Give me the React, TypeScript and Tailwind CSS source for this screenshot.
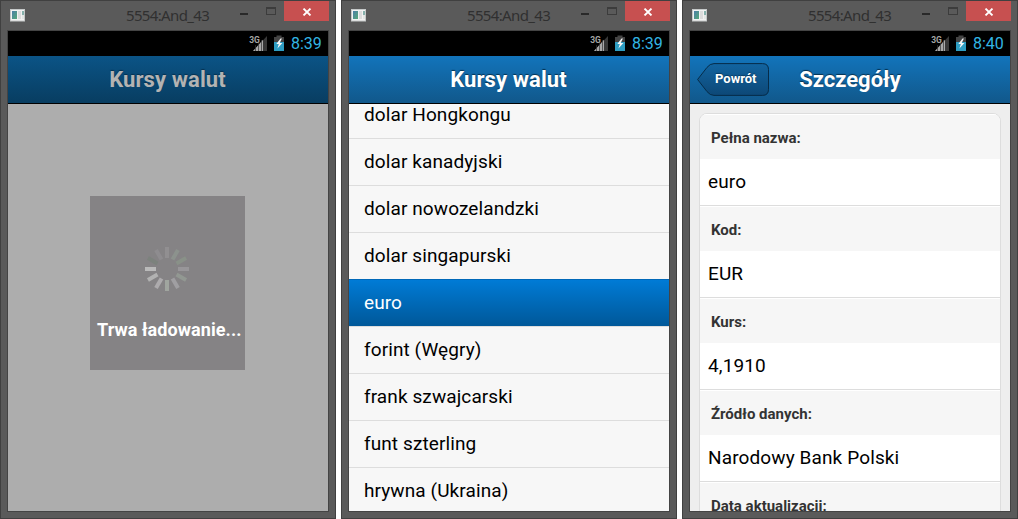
import type { ReactNode } from "react";

const currencies = [
  "dolar Hongkongu",
  "dolar kanadyjski",
  "dolar nowozelandzki",
  "dolar singapurski",
  "euro",
  "forint (Węgry)",
  "frank szwajcarski",
  "funt szterling",
  "hrywna (Ukraina)",
];

const details = [
  { label: "Pełna nazwa:", value: "euro" },
  { label: "Kod:", value: "EUR" },
  { label: "Kurs:", value: "4,1910" },
  { label: "Źródło danych:", value: "Narodowy Bank Polski" },
  { label: "Data aktualizacji:", value: "" },
];

const spokes = [
  "#918f91", "#8c928d", "#899188", "#989699", "#929892", "#a09fa2",
  "#a0a59f", "#adabad", "#b2b2b2", "#bababa", "#7c827d", "#8e8c8f",
];

function WindowIcon() {
  return (
    <svg className="ml-[9px] mt-2 h-[13px] w-[16px]" viewBox="0 0 16 13">
      <defs>
        <linearGradient id="appTile" x1="0" y1="0" x2="1" y2="1">
          <stop offset="0" stopColor="#4d7fa8" />
          <stop offset="1" stopColor="#55a878" />
        </linearGradient>
      </defs>
      <rect x="0.5" y="0.5" width="14" height="11.5" fill="#f2f2f2" stroke="#c6c9c9" />
      <rect x="2" y="2" width="5" height="8" fill="url(#appTile)" />
      <rect x="8" y="2" width="3" height="8" fill="#dcdcdc" />
      <rect x="12" y="2" width="2" height="4" fill="#86b1ac" />
      <rect x="12" y="6" width="2" height="4" fill="#e4e7e5" />
    </svg>
  );
}

function TitleBar() {
  return (
    <div className="flex h-[29px] items-start">
      <WindowIcon />
      <div className="ml-[100px] mt-[4px] w-[93px] whitespace-nowrap font-['Noto_Sans',sans-serif] text-[15px] leading-5 tracking-[-0.65px] text-[#303030]">
        5554:And_43
      </div>
      <svg className="ml-[21px] h-[20px] w-[36px]" viewBox="0 0 36 20" shapeRendering="crispEdges">
        <rect x="0" y="12" width="8" height="2" fill="#292929" />
        <rect x="26.5" y="6.5" width="9" height="7" fill="none" stroke="#3c3c3c" />
        <rect x="26" y="6" width="10" height="2" fill="#3c3c3c" />
      </svg>
      <div className="ml-[8px] flex h-[20px] w-[45px] items-center justify-center bg-[#c75050]">
        <svg className="ml-px mt-px h-[8px] w-[10px]" viewBox="0 0 10 8">
          <path d="M1.5 .6 8.5 7.4M8.5 .6 1.5 7.4" stroke="#fff" strokeWidth="1.9" />
        </svg>
      </div>
    </div>
  );
}

function StatusBar({ time }: { time: string }) {
  return (
    <div className="flex h-[25px] shrink-0 items-center justify-end bg-black pr-[5px]">
      <svg className="h-[25px] w-[40px]" viewBox="0 0 40 25">
        <text x="1.2" y="11.5" className="font-['Roboto',sans-serif] text-[8.5px] font-bold" fill="#a5a5a5">3G</text>
        <path d="M19 5V20H5Z" fill="#383838" />
        <path d="M15 8.800V20H5Z" fill="#a8a8a8" />
        <path d="M7.5 14V20M10.5 12V20M13.5 9V20" stroke="#333" strokeWidth="0.7" />
        <path d="M28.5 4.500h5v1.500h2.500v14h-10v-14h2.500z" fill="#444" />
        <path d="M26 11h10v9H26z" fill="#2e9dc2" />
        <path d="M32.500 7.500 28.300 13h2.500l-1.400 4.500 5-5.600h-2.700l2.200-4.400z" fill="#f7f7f7" />
      </svg>
      <span className="ml-[2px] w-[33px] whitespace-nowrap pl-px font-['Roboto',sans-serif] text-[16px] leading-[26px] text-[#33b5e5]">
        {time}
      </span>
    </div>
  );
}

function Header({ title, back, dim }: { title: string; back?: boolean; dim?: boolean }) {
  return (
    <header
      className={`relative flex h-[48px] shrink-0 items-center justify-center border-b border-black ${
        dim ? "bg-linear-to-b from-[#0b5486] to-[#083d61]" : "bg-linear-to-b from-[#1274bb] to-[#11588b]"
      }`}
    >
      {back && (
        <a className="absolute left-[7px] top-[7px] flex h-[33px] w-[72px] items-center pl-[18px] font-['Roboto',sans-serif] text-[13px] font-bold text-white [text-shadow:0_-1px_1px_#073b63]">
          <svg className="absolute inset-0 h-[33px] w-[72px]" viewBox="0 0 72 33">
            <defs>
              <linearGradient id="backFill" x1="0" y1="0" x2="0" y2="1">
                <stop offset="0" stopColor="#1264a0" />
                <stop offset="1" stopColor="#0d4877" />
              </linearGradient>
            </defs>
            <path
              d="M.6 16.500 10 4.400Q13 .6 17 .6H65.500Q71.500 .6 71.500 6.600V26.400Q71.500 32.400 65.500 32.400H17Q13 32.400 10 28.600Z"
              fill="url(#backFill)"
              stroke="#062c49"
            />
          </svg>
          <span className="relative -top-px">Powrót</span>
        </a>
      )}
      <h1
        className={`whitespace-nowrap font-['Roboto',sans-serif] text-[22px] font-bold leading-[47px] ${
          back ? "tracking-normal" : "-ml-px tracking-[0.1px]"
        } ${dim ? "text-[#b3b3b3]" : "text-white"} [text-shadow:0_-1px_1px_#06314f]`}
      >
        {title}
      </h1>
    </header>
  );
}

function Emulator({ time, children }: { time: string; children: ReactNode }) {
  return (
    <section className="h-[519px] w-[336px] shrink-0 overflow-hidden border border-[#404040] bg-[#5a5a5a]">
      <TitleBar />
      <div className="ml-[6px] box-content flex h-[480px] w-[320px] flex-col overflow-hidden border border-[#444]">
        <StatusBar time={time} />
        {children}
      </div>
    </section>
  );
}

function Loading() {
  return (
    <main className="min-h-0 flex-1 bg-[#adadad] pl-[82px] pt-[92px]">
      <div className="flex h-[174px] w-[155px] flex-col bg-[#858385] pl-[7px] pt-[51px]">
        <svg className="ml-[48px] h-[44px] w-[44px] shrink-0" viewBox="-22 -22 44 44">
          {spokes.map((color, i) => (
            <rect key={i} x="-2" y="-22" width="4" height="11" fill={color} transform={`rotate(${i * 30})`} />
          ))}
        </svg>
        <p className="mt-[27px] whitespace-nowrap font-['Roboto',sans-serif] text-[18px] font-bold leading-6 tracking-[0.08px] text-white">
          Trwa ładowanie...
        </p>
      </div>
    </main>
  );
}

function CurrencyList() {
  return (
    <main className="flex min-h-0 flex-1 flex-col overflow-hidden bg-[#f7f7f7]">
      <ul className="-mt-[13px] shrink-0">
        {currencies.map((name) => (
          <li
            key={name}
            className={`h-[47px] border-t pl-[15px] font-['Roboto',sans-serif] text-[19px] leading-[46px] tracking-[0.1px] ${
              name === "euro"
                ? "border-[#0068b8] bg-linear-to-b from-[#007bd6] to-[#005899] text-white"
                : "border-[#dddddd] text-black"
            }`}
          >
            {name}
          </li>
        ))}
      </ul>
    </main>
  );
}

function Details() {
  return (
    <main className="min-h-0 flex-1 overflow-hidden bg-[#eeeeee] px-[9px] pt-[9px]">
      <dl className="overflow-hidden rounded-t-[8px] border border-[#dddddd] bg-white font-['Roboto',sans-serif]">
        {details.map(({ label, value }) => (
          <div key={label} className="h-[92px] border-b border-[#dddddd]">
            <dt className="h-[45px] border-t border-white bg-[#f6f6f6] pl-[11px] text-[15px] font-bold leading-[47px] text-[#333]">
              {label}
            </dt>
            <dd className="pl-[8px] text-[19px] leading-[45px] tracking-[0.12px] text-black">{value}</dd>
          </div>
        ))}
      </dl>
    </main>
  );
}

export default function App() {
  return (
    <div className="flex h-[519px] w-[1018px] gap-[5px] overflow-hidden bg-white">
      <Emulator time="8:39">
        <Header title="Kursy walut" dim />
        <Loading />
      </Emulator>
      <Emulator time="8:39">
        <Header title="Kursy walut" />
        <CurrencyList />
      </Emulator>
      <Emulator time="8:40">
        <Header title="Szczegóły" back />
        <Details />
      </Emulator>
    </div>
  );
}
